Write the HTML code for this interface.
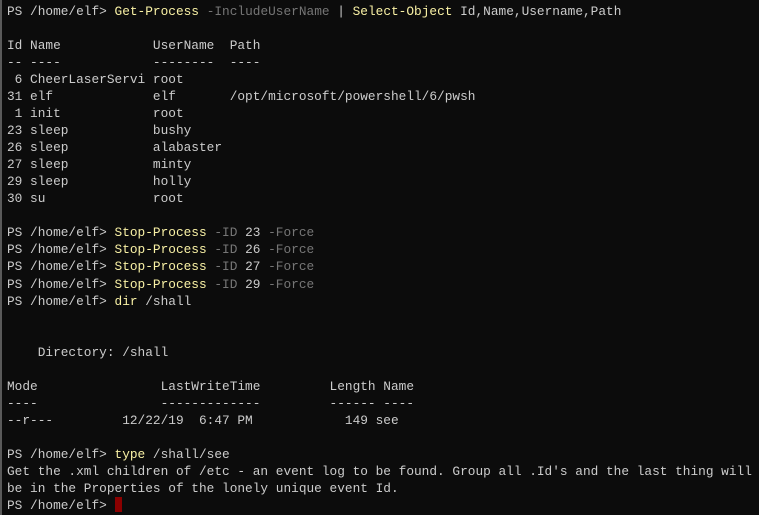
<!DOCTYPE html>
<html><head><meta charset="utf-8"><style>
html,body{margin:0;padding:0;}
body{width:759px;height:515px;background:#0c0c0c;overflow:hidden;position:relative;}
.bar{position:absolute;left:0;top:0;width:2px;height:515px;background:#5a5a5a;}
pre{position:absolute;left:7px;top:3px;margin:0;font-family:"Liberation Mono",monospace;font-size:12.8px;line-height:17.03px;color:#cccccc;white-space:pre;}
.y{color:#f9f1a5}.g{color:#767676}
.c{display:inline-block;width:7px;height:15px;background:#8b0000;vertical-align:-3px;}
</style></head><body><div class="bar"></div>
<pre>PS /home/elf&gt; <span class="y">Get-Process</span> <span class="g">-IncludeUserName</span> | <span class="y">Select-Object</span> Id,Name,Username,Path

Id Name            UserName  Path
-- ----            --------  ----
 6 CheerLaserServi root
31 elf             elf       /opt/microsoft/powershell/6/pwsh
 1 init            root
23 sleep           bushy
26 sleep           alabaster
27 sleep           minty
29 sleep           holly
30 su              root

PS /home/elf&gt; <span class="y">Stop-Process</span> <span class="g">-ID</span> 23 <span class="g">-Force</span>
PS /home/elf&gt; <span class="y">Stop-Process</span> <span class="g">-ID</span> 26 <span class="g">-Force</span>
PS /home/elf&gt; <span class="y">Stop-Process</span> <span class="g">-ID</span> 27 <span class="g">-Force</span>
PS /home/elf&gt; <span class="y">Stop-Process</span> <span class="g">-ID</span> 29 <span class="g">-Force</span>
PS /home/elf&gt; <span class="y">dir</span> /shall


    Directory: /shall

Mode                LastWriteTime         Length Name
----                -------------         ------ ----
--r---         12/22/19  6:47 PM            149 see

PS /home/elf&gt; <span class="y">type</span> /shall/see
Get the .xml children of /etc - an event log to be found. Group all .Id's and the last thing will
be in the Properties of the lonely unique event Id.
PS /home/elf&gt; <span class="c"></span></pre>
</body></html>
